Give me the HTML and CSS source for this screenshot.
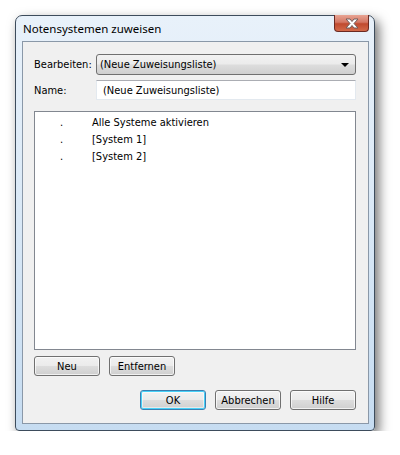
FILE: index.html
```html
<!DOCTYPE html>
<html lang="de">
<head>
    <meta charset="UTF-8" />
    <title>Notensystemen zuweisen</title>
    <link rel="stylesheet" href="styles.css">
</head>
<body>
    <div class="window">
        <div class="titlebar">
            <span class="title">Notensystemen zuweisen</span>
            <div class="close-btn">
                <svg width="16" height="11" viewBox="0 0 16 11">
                    <path d="M2 1 L6 1 L8 3.5 L10 1 L14 1 L10 5.5 L14 10 L10 10 L8 7.5 L6 10 L2 10 L6 5.5 Z"
                          fill="#fff" stroke="#6e5c5c" stroke-width="1" stroke-linejoin="round" />
                </svg>
            </div>
        </div>
        <div class="client">
            <div class="form-row">
                <label class="label">Bearbeiten:</label>
                <div class="combo">
                    <span>(Neue Zuweisungsliste)</span>
                    <span class="arrow"></span>
                </div>
            </div>
            <div class="form-row">
                <label class="label">Name:</label>
                <div class="textbox">(Neue Zuweisungsliste)</div>
            </div>
            <ul class="listbox">
                <li><span class="dot">.</span>Alle Systeme aktivieren</li>
                <li><span class="dot">.</span>[System 1]</li>
                <li><span class="dot">.</span>[System 2]</li>
            </ul>
            <div class="btn-row">
                <button class="btn">Neu</button>
                <button class="btn">Entfernen</button>
            </div>
            <div class="btn-row right">
                <button class="btn default">OK</button>
                <button class="btn">Abbrechen</button>
                <button class="btn">Hilfe</button>
            </div>
        </div>
    </div>
</body>
</html>
```

FILE: styles.css
```css
body {
    margin: 0;
    background: #fff;
    font-family: "DejaVu Sans Condensed", "DejaVu Sans", sans-serif;
    font-stretch: condensed;
    font-size: 11px;
    color: #000;
}

/* Vista style dialog frame */
.window {
    margin: 15px 0 0 15px;
    width: 360px;
    height: 416px;
    box-sizing: border-box;
    border: 1px solid #3d4c5c;
    border-radius: 7px 7px 4px 4px;
    background: linear-gradient(180deg, #e8f1fa 0%, #dceaf7 40%, #c6dcf1 100%);
    box-shadow: 4px 5px 12px rgba(0, 0, 0, 0.55);
    display: flex;
    flex-direction: column;
}

.titlebar {
    height: 25px;
    display: flex;
    align-items: flex-start;
    justify-content: space-between;
    padding-left: 7px;
    flex-shrink: 0;
}

.title {
    font-family: "Noto Sans", sans-serif;
    font-stretch: normal;
    font-size: 11.5px;
    margin-top: 5px;
    color: #000;
}

.close-btn {
    width: 35px;
    height: 17px;
    margin-right: 5px;
    margin-top: -1px;
    box-sizing: border-box;
    border: 1px solid #6b2a22;
    border-top: none;
    border-radius: 0 0 4px 4px;
    background: linear-gradient(180deg, #e8a493 0%, #d47764 45%, #c04a2f 55%, #d36a4a 100%);
    display: flex;
    align-items: center;
    justify-content: center;
}

.client {
    flex: 1;
    margin: 0 5px 6px 6px;
    background: #f0f0f0;
    border: 1px solid #8a98a8;
    padding: 12px 12px 13px 11px;
    display: flex;
    flex-direction: column;
}

.form-row {
    display: flex;
    align-items: center;
    margin-bottom: 5px;
}

.label {
    width: 62px;
    flex-shrink: 0;
}

.combo {
    flex: 1;
    height: 21px;
    box-sizing: border-box;
    border: 1px solid #707070;
    border-radius: 3px;
    background: linear-gradient(180deg, #f2f2f2 0%, #ebebeb 49%, #dddddd 51%, #cfcfcf 100%);
    display: flex;
    align-items: center;
    justify-content: space-between;
    padding: 0 4px 0 3px;
}

.arrow {
    width: 0;
    height: 0;
    border-left: 4px solid transparent;
    border-right: 4px solid transparent;
    border-top: 4px solid #000;
    margin-right: 2px;
}

.textbox {
    flex: 1;
    height: 20px;
    box-sizing: border-box;
    border: 1px solid #e3e9ef;
    border-top-color: #abadb3;
    background: #fff;
    display: flex;
    align-items: center;
    padding-left: 6px;
}

.listbox {
    list-style: none;
    margin: 6px 0 0 0;
    padding: 2px 0 0 0;
    height: 239px;
    box-sizing: border-box;
    background: #fff;
    border: 1px solid #828790;
}

.listbox li {
    height: 17px;
    line-height: 17px;
    display: flex;
}

.dot {
    width: 57px;
    padding-left: 25px;
    box-sizing: border-box;
}

.btn-row {
    display: flex;
    gap: 9px;
    margin-top: 6px;
}

.btn-row.right {
    justify-content: flex-end;
    margin-top: 14px;
}

.btn {
    width: 66px;
    height: 20px;
    font-family: inherit;
    font-stretch: condensed;
    font-size: 11px;
    color: #000;
    border: 1px solid #707070;
    border-radius: 3px;
    background: linear-gradient(180deg, #f2f2f2 0%, #ebebeb 49%, #dddddd 51%, #cfcfcf 100%);
    box-shadow: inset 0 0 0 1px rgba(255, 255, 255, 0.7);
    padding: 0;
}

.btn.default {
    border-color: #3c7fb1;
    box-shadow: inset 0 0 0 1px #48d1f8, inset 0 0 0 2px rgba(255, 255, 255, 0.5);
}
```
